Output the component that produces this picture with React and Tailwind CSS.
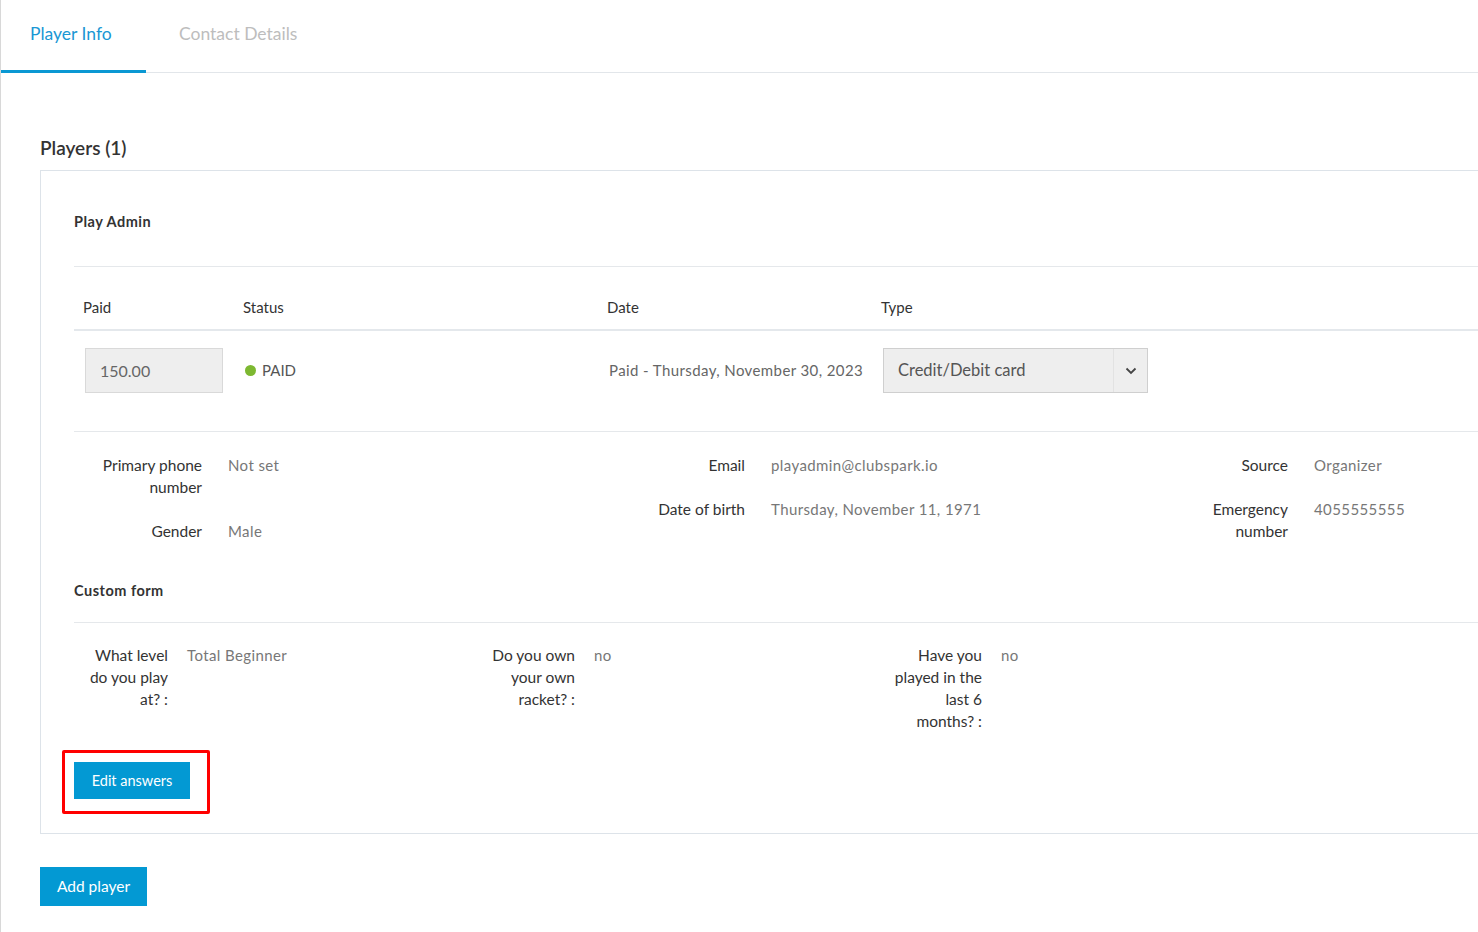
import React from "react";

const font = { fontFamily: "Lato, 'Open Sans', 'Liberation Sans', sans-serif" };

function InfoRow({ label, value }) {
  return (
    <div className="flex mb-[22px] text-[15.5px] leading-[22px]">
      <div className="w-[128px] shrink-0 pl-[6px] text-right text-[#333]">{label}</div>
      <div className="pl-[26px] text-[#777] text-[15px] tracking-[0.4px]">{value}</div>
    </div>
  );
}

function QRow({ lines, value }) {
  return (
    <div className="flex text-[15.5px] leading-[22px]">
      <div className="w-[94px] shrink-0 text-right text-[#333]">
        {lines.map((l, i) => (
          <div key={i} className="whitespace-nowrap">{l}</div>
        ))}
      </div>
      <div className="pl-[19px] text-[#777] text-[15px] tracking-[0.4px]">{value}</div>
    </div>
  );
}

export default function App() {
  return (
    <div style={font} className="min-h-[932px] w-full overflow-hidden bg-white border-l border-[#d8d8d8]">
      {/* Tabs */}
      <div className="flex h-[73px] border-b border-[#e2e6ea]">
        <div className="relative flex items-center w-[145px] pl-[29px] pb-[4px] text-[17.5px] text-[#1a97d4]">
          Player Info
          <div className="absolute left-0 right-0 bottom-[-1px] h-[3px] bg-[#0a98d3]" />
        </div>
        <div className="flex items-center pl-[33px] pb-[4px] text-[17.5px] text-[#bdbdbd]">Contact Details</div>
      </div>

      <div className="pl-[39px]">
        <h2 className="mt-[63px] mb-[10px] text-[19px] leading-[24px] font-semibold text-[#333]">Players (1)</h2>

        {/* Card */}
        <div className="-mr-[80px] border border-[#dde3e9] pl-[33px] pt-[41px] pb-[34px]">
          <div className="text-[14.5px] leading-[20px] font-bold text-[#333] tracking-[0.5px]">Play Admin</div>
          <div className="mt-[34px] border-t border-[#e5e8eb]" />

          {/* Payment table */}
          <div className="grid grid-cols-[160px_364px_274px_1fr]">
            <div className="pl-[9px] pt-[29px] pb-[11px] text-[15px] leading-[22px] text-[#333] border-b-2 border-[#e4e8ec]">Paid</div>
            <div className="pl-[9px] pt-[29px] pb-[11px] text-[15px] leading-[22px] text-[#333] border-b-2 border-[#e4e8ec]">Status</div>
            <div className="pl-[9px] pt-[29px] pb-[11px] text-[15px] leading-[22px] text-[#333] border-b-2 border-[#e4e8ec]">Date</div>
            <div className="pl-[9px] pt-[29px] pb-[11px] text-[15px] leading-[22px] text-[#333] border-b-2 border-[#e4e8ec]">Type</div>

            <div className="pl-[11px] pt-[17px] pb-[38px]">
              <div className="w-[138px] h-[45px] flex items-center pl-[14px] bg-[#eeeeee] border border-[#d9d9d9] text-[16px] text-[#666]">150.00</div>
            </div>
            <div className="pl-[11px] pt-[17px] pb-[38px] flex items-start">
              <div className="h-[45px] flex items-center gap-[6px] text-[15px] text-[#555]">
                <span className="w-[11px] h-[11px] rounded-full bg-[#7db831]" />
                PAID
              </div>
            </div>
            <div className="pl-[11px] pt-[17px] pb-[38px]">
              <div className="h-[45px] flex items-center text-[15px] tracking-[0.4px] text-[#666] whitespace-nowrap">Paid - Thursday, November 30, 2023</div>
            </div>
            <div className="pl-[11px] pt-[17px] pb-[38px]">
              <div className="w-[265px] h-[45px] flex bg-[#eeeeee] border border-[#cfcfcf]">
                <div className="flex-1 flex items-center pl-[14px] text-[16.5px] text-[#555]">Credit/Debit card</div>
                <div className="w-[34px] flex items-center justify-center border-l border-[#e2e2e2]">
                  <svg width="12" height="8" viewBox="0 0 12 8" fill="none">
                    <path d="M1.5 1.5 L6 6 L10.5 1.5" stroke="#444" strokeWidth="1.8" />
                  </svg>
                </div>
              </div>
            </div>
          </div>
          <div className="border-t border-[#e5e8eb]" />

          {/* Info */}
          <div className="grid grid-cols-[543px_543px_543px] pt-[22px]">
            <div>
              <InfoRow label="Primary phone number" value="Not set" />
              <InfoRow label="Gender" value="Male" />
            </div>
            <div>
              <InfoRow label="Email" value="playadmin@clubspark.io" />
              <InfoRow label="Date of birth" value="Thursday, November 11, 1971" />
            </div>
            <div>
              <InfoRow label="Source" value="Organizer" />
              <InfoRow label="Emergency number" value="4055555555" />
            </div>
          </div>

          <div className="mt-[17px] text-[14.5px] leading-[20px] font-bold text-[#333] tracking-[0.5px]">Custom form</div>
          <div className="mt-[21px] border-t border-[#e5e8eb]" />

          <div className="grid grid-cols-[407px_407px_407px] pt-[21px]">
            <QRow lines={["What level", "do you play", "at? :"]} value="Total Beginner" />
            <QRow lines={["Do you own", "your own", "racket? :"]} value="no" />
            <QRow lines={["Have you", "played in the", "last 6", "months? :"]} value="no" />
          </div>

          <div className="relative mt-[30px] inline-block">
            <button className="h-[37px] w-[116px] bg-[#0399d3] text-white text-[14.5px]">Edit answers</button>
            <div className="absolute left-[-12px] top-[-12px] w-[148px] h-[64px] border-[3px] border-[#ff0000] rounded-[2px] pointer-events-none" />
          </div>
        </div>

        <button className="mt-[33px] h-[39px] w-[107px] bg-[#0399d3] text-white text-[15.5px]">Add player</button>
      </div>
    </div>
  );
}
